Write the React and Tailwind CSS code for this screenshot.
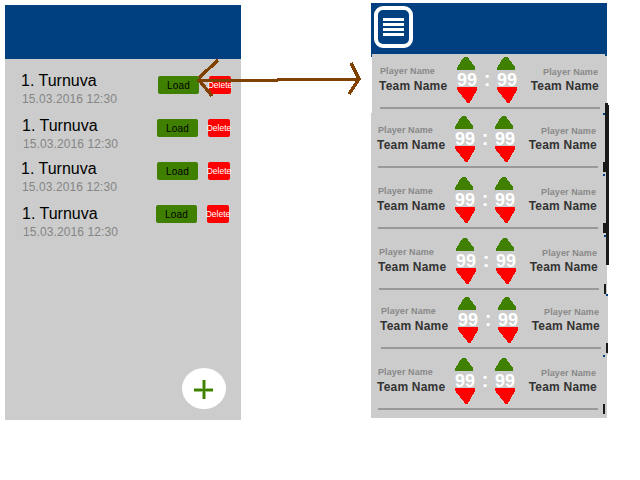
import React from "react";

const tournaments = [
  { text: "ml-[16px] pt-[13px]", actions: "pt-[17px] mr-[10px]", height: "h-[43px]" },
  { text: "ml-[17px] pt-[15px]", actions: "pt-[17px] mr-[11px]", height: "h-[43px]" },
  { text: "ml-[16px] pt-[15px]", actions: "pt-[17px] mr-[11px]", height: "h-[43px]" },
  { text: "ml-[17px] pt-[17px]", actions: "pt-[17px] mr-[12px]", height: "h-[43px]" },
];

const matches = [
  { height: "h-[59px]", panel: "ml-px w-[235px] pl-[8px]" },
  { height: "h-[61px]", panel: "w-[236px] pl-[7px]" },
  { height: "h-[61px]", panel: "w-[236px] pl-[7px]" },
  { height: "h-[59px]", panel: "w-[236px] pl-[8px]" },
  { height: "h-[61px]", panel: "w-[237px] pl-[10px]" },
  { height: "h-[63px]", panel: "w-[236px] pl-[7px]" },
];

function Tournament({ item }) {
  return (
    <div className={`flex items-start justify-between ${item.height}`}>
      <div className={`whitespace-nowrap ${item.text}`}>
        <div className="text-[16px] leading-[18px] text-black">1. Turnuva</div>
        <div className="mt-[2px] pl-px text-[12px] leading-[15px] tracking-[0.1px] text-[#858585]">15.03.2016 12:30</div>
      </div>
      <div className={`flex gap-[10px] ${item.actions}`}>
        <button className="flex h-[18px] w-[41px] items-center justify-center rounded-[2px] bg-[#408000] pt-[2px] text-[10px] leading-none tracking-[0.25px] text-black">Load</button>
        <button className="flex h-[18px] w-[22px] items-center justify-center rounded-[2px] bg-[#ff0000] text-[8.5px] leading-none whitespace-nowrap text-white">Delete</button>
      </div>
    </div>
  );
}

function Score() {
  return (
    <div className="flex w-[20px] flex-col pt-[3px]">
      <svg className="block" width="20" height="13" shapeRendering="crispEdges">
        <path d="M0 13V10.5L6 1L7.5 0H10L12 2L18 10V13Z" fill="#408000" />
      </svg>
      <div className="h-[17px] text-[18px] leading-[21px] font-bold text-white">99</div>
      <svg className="block" width="20" height="16" shapeRendering="crispEdges">
        <path d="M0 0H20V3L13.5 14.5L12 16H10.5L1 4L0 3Z" fill="#ff0000" />
      </svg>
    </div>
  );
}

function Match({ item }) {
  return (
    <div className={`flex flex-col bg-[#cccccc] ${item.height} ${item.panel}`}>
      <div className="flex h-[53px] w-[220px]">
        <div className="w-[77px] pt-[12px] whitespace-nowrap">
          <div className="text-[9px] leading-[11px] font-bold tracking-[0.08px] text-[#888888]">Player Name</div>
          <div className="mt-[2px] -ml-px text-[12px] leading-[14px] font-bold tracking-[0.2px] text-[#333333]">Team Name</div>
        </div>
        <Score />
        <div className="w-[20px] pt-[14px] text-center text-[20px] leading-[22px] font-bold text-white">:</div>
        <Score />
        <div className="flex flex-1 flex-col items-end pt-[13px] whitespace-nowrap">
          <div className="mr-[2px] h-[10px] overflow-hidden text-[9px] leading-[11px] font-bold tracking-[0.08px] text-[#888888]">Player Name</div>
          <div className="mt-[2px] mr-px text-[12px] leading-[14px] font-bold tracking-[0.2px] text-[#333333]">Team Name</div>
        </div>
      </div>
      <div className="h-[2px] w-[220px] bg-[#999999]" />
    </div>
  );
}

export default function App() {
  return (
    <div className="relative flex h-[480px] w-[640px] items-start overflow-hidden bg-white font-['Liberation_Sans',Arial,sans-serif]">
      <section className="mt-[5px] ml-[5px] flex h-[415px] w-[236px] flex-col bg-[#cccccc]">
        <header className="h-[54px] shrink-0 bg-[#004080]" />
        <div className="flex-1">
          {tournaments.map((t, i) => <Tournament key={i} item={t} />)}
        </div>
        <button className="mr-[15px] mb-[11px] flex h-[41px] w-[44px] items-center justify-center self-end rounded-[50%] bg-white" aria-label="+">
          <svg width="20" height="20" viewBox="0 0 20 20" shapeRendering="crispEdges">
            <path d="M0 9h19v4H0zM8 1h4v19H8z" fill="#a3c47f" />
            <path d="M0 10h19v2H0zM9 1h2v19H9z" fill="#408000" />
          </svg>
        </button>
      </section>

      <section className="mt-[3px] ml-[130px] h-[415px] w-[236px]">
        <header className="flex h-[51px] items-start bg-[#004080] pt-[3px] pl-[3px]">
          <button className="flex h-[42px] w-[39px] flex-col items-center gap-[2px] rounded-[9px] border-4 border-white pt-[8px]">
            <span className="h-[3px] w-[21px] bg-white" />
            <span className="h-[3px] w-[21px] bg-white" />
            <span className="h-[3px] w-[21px] bg-white" />
            <span className="h-[3px] w-[21px] bg-white" />
          </button>
        </header>
        {matches.map((m, i) => <Match key={i} item={m} />)}
      </section>

      <svg className="pointer-events-none absolute inset-0" width="640" height="480" shapeRendering="crispEdges">
        <path d="M605 103h3v2h1v160h-3V172h-3v-10h2zM603 223h3v10h-3zM604 284h2v10h-2zM606 343h2v10h-2zM603 404h2v10h-2z" fill="#191919" />
        <path d="M603 113h2v2h-2zM603 174h2v2h-2zM604 235h2v2h-2zM606 294h2v2h-2zM603 355h2v2h-2zM605 54h2v2h-2zM371 54h1v3h-1z" fill="#004080" />
        <path d="M197 80.5H278M277 79.5H360M218 60L199 78M199 80L212 96M351 63L359 79L349 94" fill="none" stroke="#804000" strokeWidth="3.4" />
      </svg>
    </div>
  );
}
